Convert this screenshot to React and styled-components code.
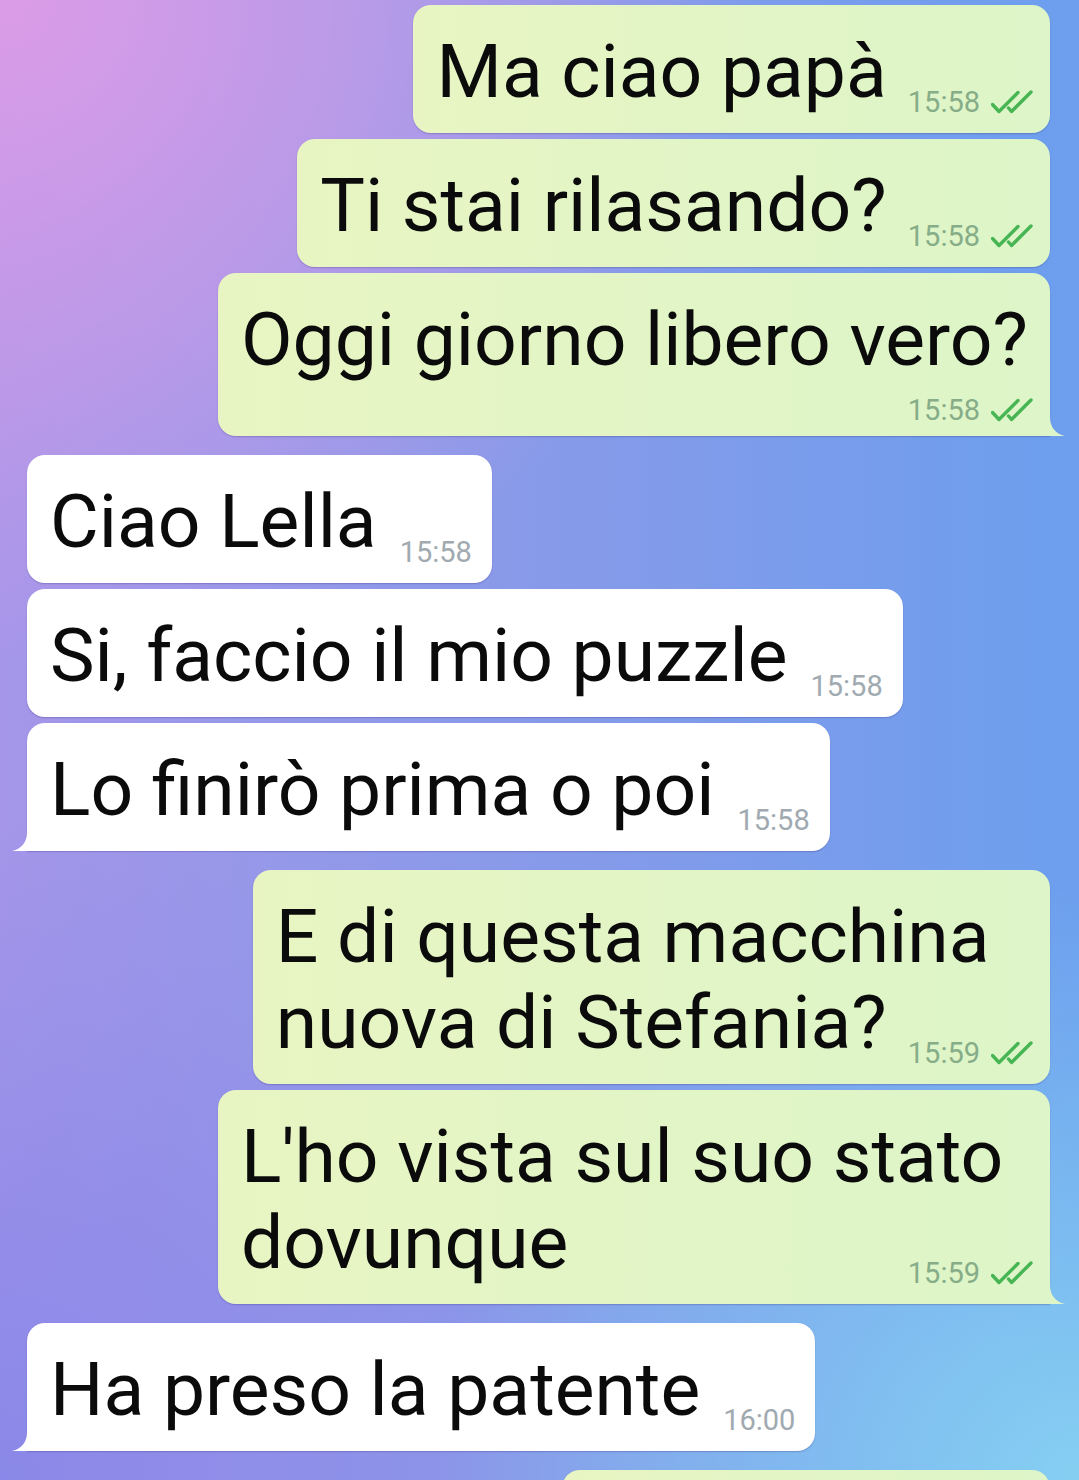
import React from "react";
import styled, { createGlobalStyle } from "styled-components";

const GlobalStyle = createGlobalStyle`
  html, body {
    margin: 0;
    padding: 0;
  }
  body {
    font-family: Roboto, "Noto Sans", sans-serif;
    -webkit-font-smoothing: antialiased;
  }
`;

const groups = [
  {
    out: true,
    items: [
      { text: "Ma ciao papà", time: "15:58" },
      { text: "Ti stai rilasando?", time: "15:58" },
      { text: "Oggi giorno libero vero?", time: "15:58", below: true },
    ],
  },
  {
    out: false,
    items: [
      { text: "Ciao Lella", time: "15:58" },
      { text: "Si, faccio il mio puzzle", time: "15:58" },
      { text: "Lo finirò prima o poi", time: "15:58" },
    ],
  },
  {
    out: true,
    items: [
      { lines: ["E di questa macchina", "nuova di Stefania?"], time: "15:59" },
      { text: "L'ho vista sul suo stato dovunque", time: "15:59" },
    ],
  },
  {
    out: false,
    items: [{ text: "Ha preso la patente", time: "16:00" }],
  },
  {
    out: true,
    items: [{ text: "Brava lei!", time: "16:00" }],
  },
];

const Checks = () => (
  <CheckIcon viewBox="0 0 42 24" width="42" height="24">
    <path d="M1.5 14.5 L8 21.5 L27 2.5" />
    <path d="M17.5 18 L20.5 21.5 L40 2" />
  </CheckIcon>
);

const Tail = ({ out }) => (
  <TailShape $out={out} viewBox="0 0 15 19" width="15" height="19">
    <path d="M0 0 C0 10 5 16.5 15 19 L0 19 Z" />
  </TailShape>
);

const Message = ({ out, tail, text, lines, time, below }) => (
  <Bubble $out={out} $tail={tail}>
    {lines
      ? lines.map((l, i) => (
          <React.Fragment key={i}>
            {i > 0 && <br />}
            {l}
          </React.Fragment>
        ))
      : text}
    <Meta $out={out} $below={below}>
      <Time $out={out}>{time}</Time>
      {out && <Checks />}
    </Meta>
    {tail && <Tail out={out} />}
  </Bubble>
);

const App = () => {
  return (
    <>
      <GlobalStyle />
      <Screen>
        <Chat>
          {groups.map((g, gi) => (
            <Group key={gi} $out={g.out}>
              {g.items.map((m, i) => (
                <Message
                  key={i}
                  out={g.out}
                  tail={i === g.items.length - 1 && gi < groups.length - 1}
                  {...m}
                />
              ))}
            </Group>
          ))}
        </Chat>
      </Screen>
    </>
  );
};

const Screen = styled.div`
  width: 1079px;
  height: 1480px;
  overflow: hidden;
  background:
    radial-gradient(ellipse 70% 45% at 0% 0%, #db9ce7 0%, rgba(219, 156, 231, 0) 100%),
    radial-gradient(ellipse 60% 40% at 100% 100%, #86cff2 0%, rgba(134, 207, 242, 0) 100%),
    radial-gradient(ellipse 60% 45% at 0% 100%, #8a88e8 0%, rgba(138, 136, 232, 0) 100%),
    linear-gradient(90deg, #a596e9 0%, #879ae9 50%, #6c9fee 100%);
`;

const Chat = styled.div`
  display: flex;
  flex-direction: column;
  gap: 19px;
  padding: 5px 29px 0 27px;
`;

const Group = styled.div`
  display: flex;
  flex-direction: column;
  gap: 6px;
  align-items: ${(p) => (p.$out ? "flex-end" : "flex-start")};
`;

const Bubble = styled.div`
  position: relative;
  display: flow-root;
  box-sizing: border-box;
  max-width: ${(p) => (p.$out ? "832px" : "900px")};
  padding: 23px ${(p) => (p.$out ? "17px" : "20px")} 16px 23px;
  font-size: 75px;
  line-height: 86px;
  color: #0b0b0b;
  background: ${(p) =>
    p.$out ? "linear-gradient(90deg, #e8f5c3 0%, #ddf5c8 100%)" : "#ffffff"};
  border-radius: 18px;
  ${(p) =>
    p.$tail &&
    (p.$out ? "border-bottom-right-radius: 0;" : "border-bottom-left-radius: 0;")}
  box-shadow: 0 1px 1.5px rgba(50, 40, 110, 0.28);
`;

const Meta = styled.span`
  float: right;
  display: flex;
  align-items: flex-end;
  gap: 11px;
  margin-left: ${(p) => (p.$out ? "21px" : "23px")};
  padding-top: ${(p) => (p.$below ? "14px" : "60px")};
  margin-bottom: ${(p) => (p.$below ? "-5px" : "0")};
`;

const Time = styled.span`
  font-size: 29px;
  line-height: 29px;
  color: ${(p) => (p.$out ? "#86ad88" : "#a0aab0")};
`;

const CheckIcon = styled.svg`
  display: block;
  margin-bottom: 3px;
  fill: none;
  stroke: #47b553;
  stroke-width: 3.4;
  stroke-linecap: round;
  stroke-linejoin: round;
`;

const TailShape = styled.svg`
  position: absolute;
  bottom: 0;
  ${(p) => (p.$out ? "right: -15px;" : "left: -15px; transform: scaleX(-1);")}
  fill: ${(p) => (p.$out ? "#ddf5c8" : "#ffffff")};
`;

export default App;
